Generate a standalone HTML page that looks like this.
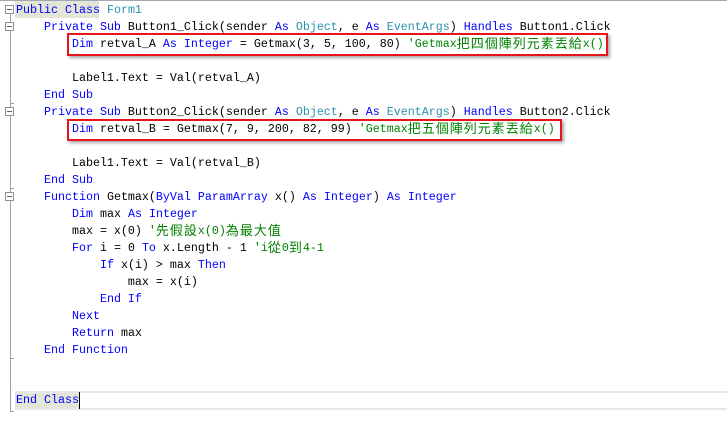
<!DOCTYPE html>
<html><head><meta charset="utf-8"><style>
html,body{margin:0;padding:0;background:#fff;width:727px;height:445px;overflow:hidden;position:relative}
.l{position:absolute;left:16px;height:17px;line-height:17px;white-space:pre;font-family:"Liberation Mono",monospace;font-size:11.67px;color:#000}
.k{color:#0000ff}.t{color:#2b91af}.g{color:#008000}
.c{font-family:"Noto Sans CJK TC",sans-serif;font-size:13px;letter-spacing:1px;display:inline-block;height:17px;line-height:17px;vertical-align:top;position:relative;top:-2px}
.box{position:absolute;border:2px solid #e8141c;box-shadow:2px 2px 3px rgba(0,0,0,.35)}
.fold{position:absolute;left:5px;width:7px;height:7px;border:1px solid #909090;background:#fff}
.fold:after{content:"";position:absolute;left:1px;top:3px;width:5px;height:1px;background:#606060}
</style></head><body>
<div style="position:absolute;left:0;top:0;width:727px;height:1px;background:#a0a8b4"></div>
<div style="position:absolute;left:10px;top:14px;width:1px;height:398px;background:#a0a0a0"></div>
<div style="position:absolute;left:10px;top:103px;width:4px;height:1px;background:#a0a0a0"></div>
<div style="position:absolute;left:10px;top:188px;width:4px;height:1px;background:#a0a0a0"></div>
<div style="position:absolute;left:10px;top:358px;width:4px;height:1px;background:#a0a0a0"></div>
<div style="position:absolute;left:10px;top:411px;width:4px;height:1px;background:#a0a0a0"></div>
<div class="fold" style="top:5px"></div>
<div class="fold" style="top:22px"></div>
<div class="fold" style="top:107px"></div>
<div class="fold" style="top:192px"></div>
<div style="position:absolute;left:15px;top:1px;width:84px;height:17px;background:#e3e6d7"></div>
<div style="position:absolute;left:15px;top:391px;width:712px;height:2px;background:#e6e6ee"></div>
<div style="position:absolute;left:15px;top:408px;width:712px;height:2px;background:#e6e6ee"></div>
<div style="position:absolute;left:15px;top:393px;width:64px;height:15px;background:#e3e6d7"></div>
<div style="position:absolute;left:79px;top:392px;width:1px;height:17px;background:#000"></div>
<div class="box" style="left:67px;top:33px;width:537px;height:19px"></div>
<div class="box" style="left:67px;top:119px;width:491px;height:18px"></div>

<div class="l" style="top:2px"><span class="k">Public Class</span> <span class="t">Form1</span></div>
<div class="l" style="top:19px">    <span class="k">Private Sub</span> Button1_Click(sender <span class="k">As</span> <span class="t">Object</span>, e <span class="k">As</span> <span class="t">EventArgs</span>) <span class="k">Handles</span> Button1.Click</div>
<div class="l" style="top:36px">        <span class="k">Dim</span> retval_A <span class="k">As</span> <span class="k">Integer</span> = Getmax(3, 5, 100, 80) <span class="g">'Getmax<span class="c">把四個陣列元素丟給</span>x()</span></div>
<div class="l" style="top:70px">        Label1.Text = Val(retval_A)</div>
<div class="l" style="top:87px">    <span class="k">End Sub</span></div>
<div class="l" style="top:104px">    <span class="k">Private Sub</span> Button2_Click(sender <span class="k">As</span> <span class="t">Object</span>, e <span class="k">As</span> <span class="t">EventArgs</span>) <span class="k">Handles</span> Button2.Click</div>
<div class="l" style="top:121px">        <span class="k">Dim</span> retval_B = Getmax(7, 9, 200, 82, 99) <span class="g">'Getmax<span class="c">把五個陣列元素丟給</span>x()</span></div>
<div class="l" style="top:155px">        Label1.Text = Val(retval_B)</div>
<div class="l" style="top:172px">    <span class="k">End Sub</span></div>
<div class="l" style="top:189px">    <span class="k">Function</span> Getmax(<span class="k">ByVal</span> <span class="k">ParamArray</span> x() <span class="k">As</span> <span class="k">Integer</span>) <span class="k">As</span> <span class="k">Integer</span></div>
<div class="l" style="top:206px">        <span class="k">Dim</span> max <span class="k">As</span> <span class="k">Integer</span></div>
<div class="l" style="top:223px">        max = x(0) <span class="g">'<span class="c">先假設</span>x(0)<span class="c">為最大值</span></span></div>
<div class="l" style="top:240px">        <span class="k">For</span> i = 0 <span class="k">To</span> x.Length - 1 <span class="g">'i<span class="c">從</span>0<span class="c">到</span>4-1</span></div>
<div class="l" style="top:257px">            <span class="k">If</span> x(i) &gt; max <span class="k">Then</span></div>
<div class="l" style="top:274px">                max = x(i)</div>
<div class="l" style="top:291px">            <span class="k">End If</span></div>
<div class="l" style="top:308px">        <span class="k">Next</span></div>
<div class="l" style="top:325px">        <span class="k">Return</span> max</div>
<div class="l" style="top:342px">    <span class="k">End Function</span></div>
<div class="l" style="top:392px"><span class="k">End Class</span></div>
</body></html>
